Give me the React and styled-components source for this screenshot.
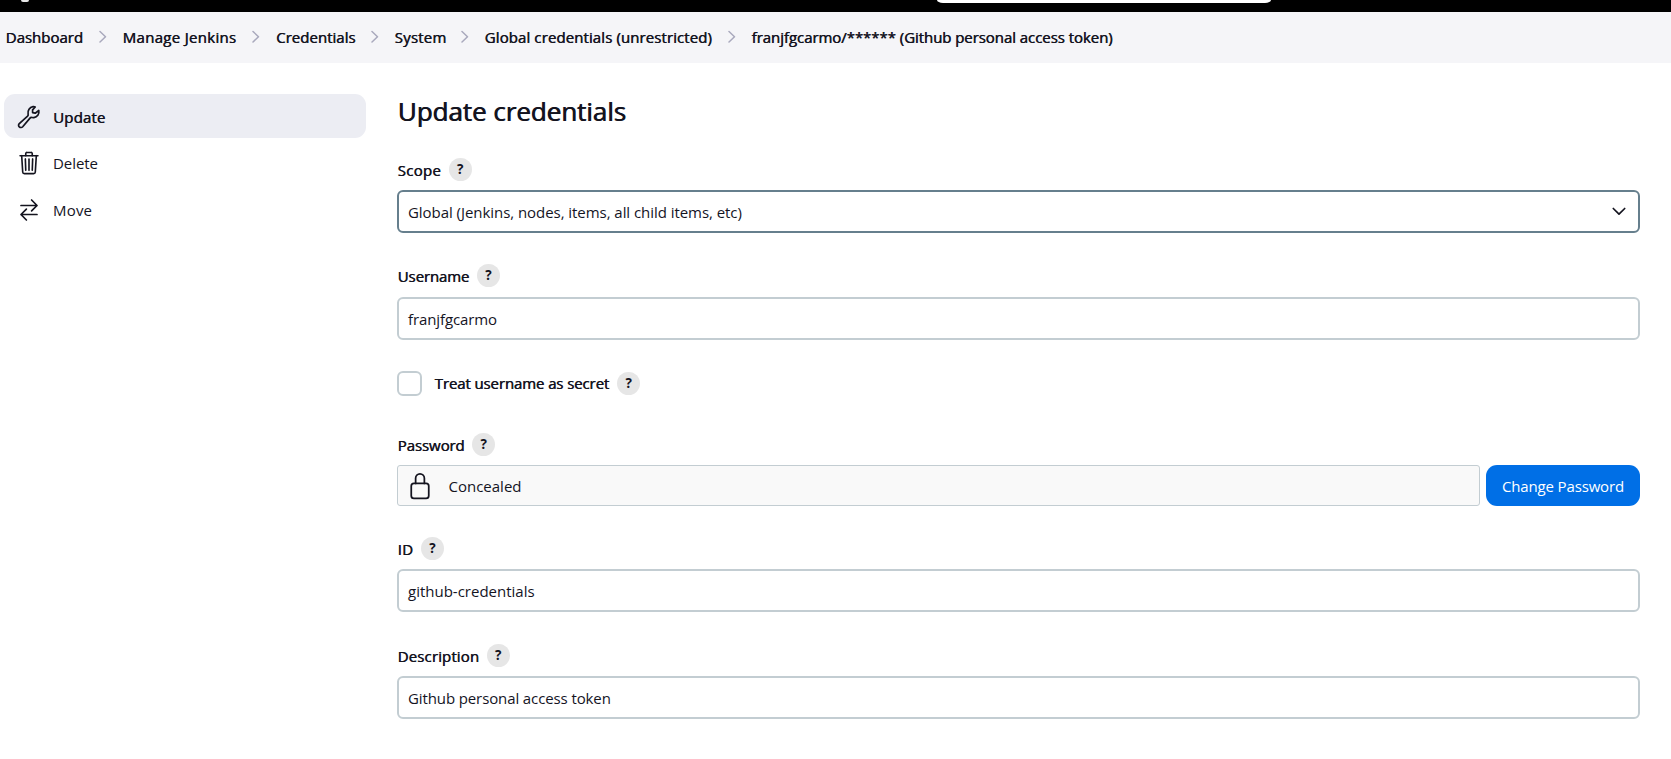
import React from "react";
import styled, { createGlobalStyle, css } from "styled-components";
import { IoTrashOutline, IoLockClosedOutline } from "react-icons/io5";

const GlobalStyle = createGlobalStyle`
  * { box-sizing: border-box; }
  body {
    margin: 0;
    background: #fff;
    color: #14141f;
    font-family: "Open Sans", "Noto Sans", sans-serif;
    font-size: 15px;
    overflow: hidden;
  }
`;

const semibold = css`
  text-shadow: 0.5px 0 0 currentColor;
`;

const Text = styled.span`
  white-space: nowrap;
  line-height: 20px;
  letter-spacing: ${(p) => p.$track || 0}px;
  ${(p) => p.$strong && semibold}
`;

const Page = styled.div`
  display: flex;
  flex-direction: column;
  height: 759px;
`;

const Header = styled.header`
  display: flex;
  height: 12px;
  background: #000;
`;

const LogoEdge = styled.div`
  width: 8px;
  height: 2px;
  margin-left: 21px;
  border-radius: 0 0 3px 3px;
  background: #e8e8e8;
`;

const SearchEdge = styled.div`
  width: 334px;
  height: 3px;
  margin-left: 908px;
  border-radius: 0 0 6px 6px / 0 0 3px 3px;
  background: #fff;
`;

const Breadcrumbs = styled.nav`
  display: flex;
  align-items: center;
  height: 51px;
  padding: 0 0 1px 5.5px;
  background: #f5f5f8;
`;

const Crumb = styled(Text)`
  width: ${(p) => p.$width}px;
`;

const Separator = styled.svg`
  flex: none;
  width: 8px;
  height: 14px;
  margin: 0 16px;
  fill: none;
  stroke: #a9a9bd;
  stroke-width: 1.5;
  stroke-linecap: round;
  stroke-linejoin: round;
`;

const Body = styled.div`
  display: flex;
  flex: 1;
  padding: 31px 31px 0 4px;
`;

const Sidebar = styled.aside`
  display: flex;
  flex-direction: column;
  gap: 2.7px;
  width: 362px;
  margin-right: 31px;
`;

const Task = styled.a`
  display: flex;
  align-items: center;
  gap: 11.5px;
  height: 44px;
  padding: 1px 0 0 11.5px;
  border-radius: 11px;
  background: ${(p) => (p.$active ? "#ecedf3" : "transparent")};
`;

const TaskIcon = styled.span`
  display: flex;
  align-items: center;
  justify-content: center;
  width: 26px;
  height: 26px;
  svg { flex: none; }
`;

const LineIcon = styled.svg`
  width: 24px;
  height: 24px;
  fill: none;
  stroke: currentColor;
  stroke-width: 1.7;
  stroke-linecap: round;
  stroke-linejoin: round;
`;

const Main = styled.main`
  flex: 1;
`;

const Title = styled.h1`
  margin: 0;
  height: 64px;
  padding-left: 0.5px;
  font-size: 26px;
  font-weight: 400;
  line-height: 34px;
  text-shadow: 0.8px 0 0 currentColor;
  letter-spacing: ${(p) => p.$track}px;
`;

const Field = styled.section`
  margin-bottom: ${(p) => p.$gap}px;
`;

const LabelRow = styled.div`
  display: flex;
  align-items: center;
  gap: 8px;
  height: 23px;
  padding-left: 0.5px;
  margin-bottom: ${(p) => p.$space || 9}px;
`;

const CheckRow = styled.div`
  display: flex;
  align-items: center;
  gap: 8.5px;
  height: 25px;
  margin-bottom: 37px;
`;

const CheckLabel = styled(Text)`
  padding-bottom: 1.5px;
`;

const Checkbox = styled.span`
  width: 25px;
  height: 25px;
  margin-right: 4px;
  border: 2px solid #c3cdd2;
  border-radius: 6px;
`;

const Help = styled.span`
  display: flex;
  align-items: center;
  justify-content: center;
  width: 22.5px;
  height: 23px;
  padding-bottom: 1px;
  border-radius: 50%;
  background: #e6e6e6;
  font-size: 13.5px;
  font-weight: 700;
  line-height: 20px;
`;

const Control = styled.div`
  display: flex;
  align-items: center;
  justify-content: space-between;
  height: 43px;
  padding: 0 12.5px 0 9px;
  border: 2px solid ${(p) => (p.$focused ? "#667f8d" : "#c3cdd2")};
  border-radius: 6px;
`;

const Chevron = styled.svg`
  width: 14px;
  height: 9px;
  fill: none;
  stroke: currentColor;
  stroke-width: 1.7;
  stroke-linecap: round;
  stroke-linejoin: round;
`;

const SecretRow = styled.div`
  display: flex;
  gap: 6px;
`;

const Concealed = styled.div`
  display: flex;
  flex: 1;
  align-items: center;
  gap: 15px;
  height: 41px;
  padding: 0 0 0 7.5px;
  border: 1px solid #c3cdd2;
  border-radius: 3px;
  background: #f9f9f9;
`;

const Button = styled.button`
  display: flex;
  align-items: center;
  justify-content: center;
  width: 154px;
  height: 41px;
  padding: 1px 0 0;
  border: 0;
  border-radius: 11px;
  background: #006fe6;
  color: #fff;
  font: inherit;
`;

const crumbs = [
  { label: "Dashboard", width: 77, track: 0 },
  { label: "Manage Jenkins", width: 113.5, track: 0.3 },
  { label: "Credentials", width: 78.5, track: 0.02 },
  { label: "System", width: 50, track: 0.2 },
  { label: "Global credentials (unrestricted)", width: 227, track: 0.1 },
  { label: "franjfgcarmo/****** (Github personal access token)", width: 362, track: -0.06 },
];

function FieldLabel({ label, track, space }) {
  return (
    <LabelRow $space={space}>
      <Text $strong $track={track}>{label}</Text>
      <Help>?</Help>
    </LabelRow>
  );
}

export default function App() {
  return (
    <Page>
      <GlobalStyle />
      <Header>
        <LogoEdge />
        <SearchEdge />
      </Header>
      <Breadcrumbs>
        {crumbs.map((c, i) => (
          <React.Fragment key={c.label}>
            {i > 0 && (
              <Separator viewBox="0 0 8 14">
                <path d="M1 1.5 6.5 6.7 1 12" />
              </Separator>
            )}
            <Crumb $strong $track={c.track} $width={c.width}>{c.label}</Crumb>
          </React.Fragment>
        ))}
      </Breadcrumbs>
      <Body>
        <Sidebar>
          <Task $active>
            <TaskIcon>
              <LineIcon viewBox="0 0 24 24">
                <path d="M2.3 18.6 10.6 11.2C11.2 10.6 11.3 9.9 11.1 9.1C10.4 5.4 12.6 2.2 16 1.7C16.8 1.6 17.6 1.7 18.2 2L15.6 4.8V7.6L18.2 8.2L21.8 5.5C22.5 9.1 20.2 12.1 16.9 12.6C16.3 12.7 15.6 12.6 14.9 12.5C14.1 12.3 13.5 12.5 13 13.1L5.7 21.7C4.8 22.7 3.3 22.8 2.3 21.9C1.3 20.9 1.3 19.5 2.3 18.6Z" />
              </LineIcon>
            </TaskIcon>
            <Text $strong $track={0.15}>Update</Text>
          </Task>
          <Task>
            <TaskIcon><IoTrashOutline size={26} /></TaskIcon>
            <Text $track={-0.05}>Delete</Text>
          </Task>
          <Task>
            <TaskIcon>
              <LineIcon viewBox="0 0 24 24">
                <path d="M4 7.5H20M14.6 2 20 7.5 14.6 12.8M20 16.5H4M9.4 11.2 4 16.5 9.4 22" />
              </LineIcon>
            </TaskIcon>
            <Text $track={0.2}>Move</Text>
          </Task>
        </Sidebar>
        <Main>
          <Title $track={-0.05}>Update credentials</Title>
          <Field $gap={31}>
            <FieldLabel label="Scope" track={0.3} />
            <Control $focused>
              <Text $track={-0.05}>Global (Jenkins, nodes, items, all child items, etc)</Text>
              <Chevron viewBox="0 0 14 9"><path d="M1.3 1.5 7 7.2 12.7 1.5" /></Chevron>
            </Control>
          </Field>
          <Field $gap={31}>
            <FieldLabel label="Username" track={-0.1} space={10} />
            <Control><Text $track={-0.11}>franjfgcarmo</Text></Control>
          </Field>
          <CheckRow>
            <Checkbox />
            <CheckLabel $strong $track={-0.11}>Treat username as secret</CheckLabel>
            <Help>?</Help>
          </CheckRow>
          <Field $gap={31}>
            <FieldLabel label="Password" track={-0.08} />
            <SecretRow>
              <Concealed>
                <IoLockClosedOutline size={28} />
                <Text>Concealed</Text>
              </Concealed>
              <Button><Text $track={-0.15}>Change Password</Text></Button>
            </SecretRow>
          </Field>
          <Field $gap={32}>
            <FieldLabel label="ID" track={0.3} />
            <Control><Text>github-credentials</Text></Control>
          </Field>
          <Field $gap={0}>
            <FieldLabel label="Description" track={0.13} />
            <Control><Text $track={-0.11}>Github personal access token</Text></Control>
          </Field>
        </Main>
      </Body>
    </Page>
  );
}
